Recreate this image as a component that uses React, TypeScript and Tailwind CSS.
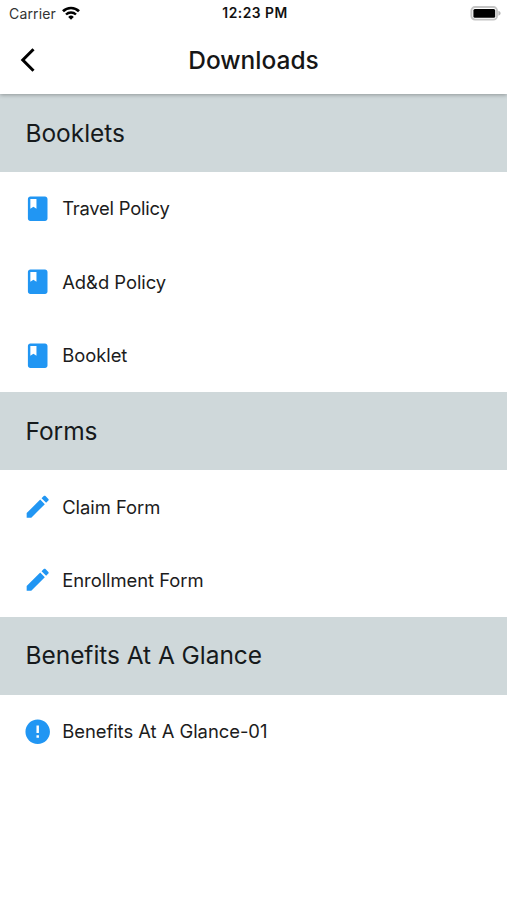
import clsx from 'clsx'

type ItemKind = 'book' | 'form' | 'info'

interface Section {
  title: string
  kind: ItemKind
  items: string[]
}

const sections: Section[] = [
  { title: 'Booklets', kind: 'book', items: ['Travel Policy', 'Ad&d Policy', 'Booklet'] },
  { title: 'Forms', kind: 'form', items: ['Claim Form', 'Enrollment Form'] },
  { title: 'Benefits At A Glance', kind: 'info', items: ['Benefits At A Glance-01'] },
]

const iconPaths: Record<ItemKind, string> = {
  book: 'M18 2H6c-1.1 0-2 .9-2 2v16c0 1.1.9 2 2 2h12c1.1 0 2-.9 2-2V4c0-1.1-.9-2-2-2zM6 4h5v8l-2.5-1.5L6 12V4z',
  form: 'M3 17.25V21h3.75L17.81 9.94l-3.75-3.75L3 17.25zM20.71 7.04c.39-.39.39-1.02 0-1.41l-2.34-2.34c-.39-.39-1.02-.39-1.41 0l-1.83 1.83 3.75 3.75 1.83-1.83z',
  info: 'M12 2C6.48 2 2 6.48 2 12s4.48 10 10 10 10-4.48 10-10S17.52 2 12 2zm1 15h-2v-2h2v2zm0-4h-2V7h2v6z',
}

function ItemIcon({ kind }: { kind: ItemKind }) {
  return (
    <svg viewBox="0 0 24 24" className="size-[29.4px] shrink-0 fill-[#2196f3]">
      <path d={iconPaths[kind]} />
    </svg>
  )
}

function StatusBar() {
  return (
    <div className="grid h-[27px] grid-cols-[1fr_auto_1fr] items-center pl-[9px] pr-[6px] text-[#111]">
      <div className="flex items-center gap-[6px]">
        <span className="text-[14px] leading-none tracking-[0.15px] text-[#333]">Carrier</span>
        <svg viewBox="0 0 18 14" className="-mt-[2px] h-[14px] w-[18px]">
          <path d="M1 5.3a11.4 11.4 0 0 1 16 0" fill="none" stroke="#000" strokeWidth="2.7" />
          <path d="M4 8.5a7.1 7.1 0 0 1 10 0" fill="none" stroke="#000" strokeWidth="2.4" />
          <path d="M6.2 10.9a4.1 4.1 0 0 1 5.6 0L9 13.7z" />
        </svg>
      </div>
      <span className="pt-px text-center text-[13.8px] font-semibold leading-none tracking-[0.5px]">12:23 PM</span>
      <svg viewBox="0 0 31 15" className="h-[15px] w-[31px] justify-self-end">
        <rect x="1.4" y="1" width="25.6" height="12.6" rx="3.6" fill="#fff" stroke="#c4c4c4" strokeWidth="1.9" />
        <rect x="3.4" y="3" width="21.8" height="8.8" rx="1.5" />
        <path d="M28.4 4.8v5c1.300-.4 2.200-1.400 2.200-2.500s-.9-2.100-2.200-2.500z" fill="#b5b5b5" />
      </svg>
    </div>
  )
}

export default function App() {
  return (
    <div className="flex h-[900px] w-[507px] flex-col overflow-hidden bg-white font-['Inter',sans-serif] text-[#1c1c1c]">
      <header className="relative z-10 h-[94px] shrink-0 bg-white shadow-[0_1px_4px_rgba(0,0,0,0.3)]">
        <StatusBar />
        <div className="grid h-[65px] grid-cols-[60px_1fr_60px] items-center">
          <svg viewBox="0 0 16 26" className="ml-5 h-[26px] w-4">
            <path d="M13.5 2.2 2.8 13l10.7 10.8" fill="none" stroke="#000" strokeWidth="3" />
          </svg>
          <h1 className="pt-px text-center text-[24.5px] font-medium leading-none text-[#161616]">Downloads</h1>
        </div>
      </header>

      {sections.map(section => (
        <section key={section.title}>
          <h2 className="flex h-[78px] items-center bg-[#cfd8da] pl-[25.5px] text-[24.5px] leading-none tracking-[-0.05px] text-[#161a1c]">
            {section.title}
          </h2>
          <ul>
            {section.items.map(item => (
              <li key={item} className="flex h-[73.35px] items-center gap-[10px] pl-[22.8px]">
                <ItemIcon kind={section.kind} />
                <span
                  className={clsx(
                    'text-[18.4px] leading-none',
                    item.startsWith('T') ? 'tracking-[-0.22px]' : 'tracking-[-0.03px]',
                  )}
                >
                  {item}
                </span>
              </li>
            ))}
          </ul>
        </section>
      ))}
    </div>
  )
}
